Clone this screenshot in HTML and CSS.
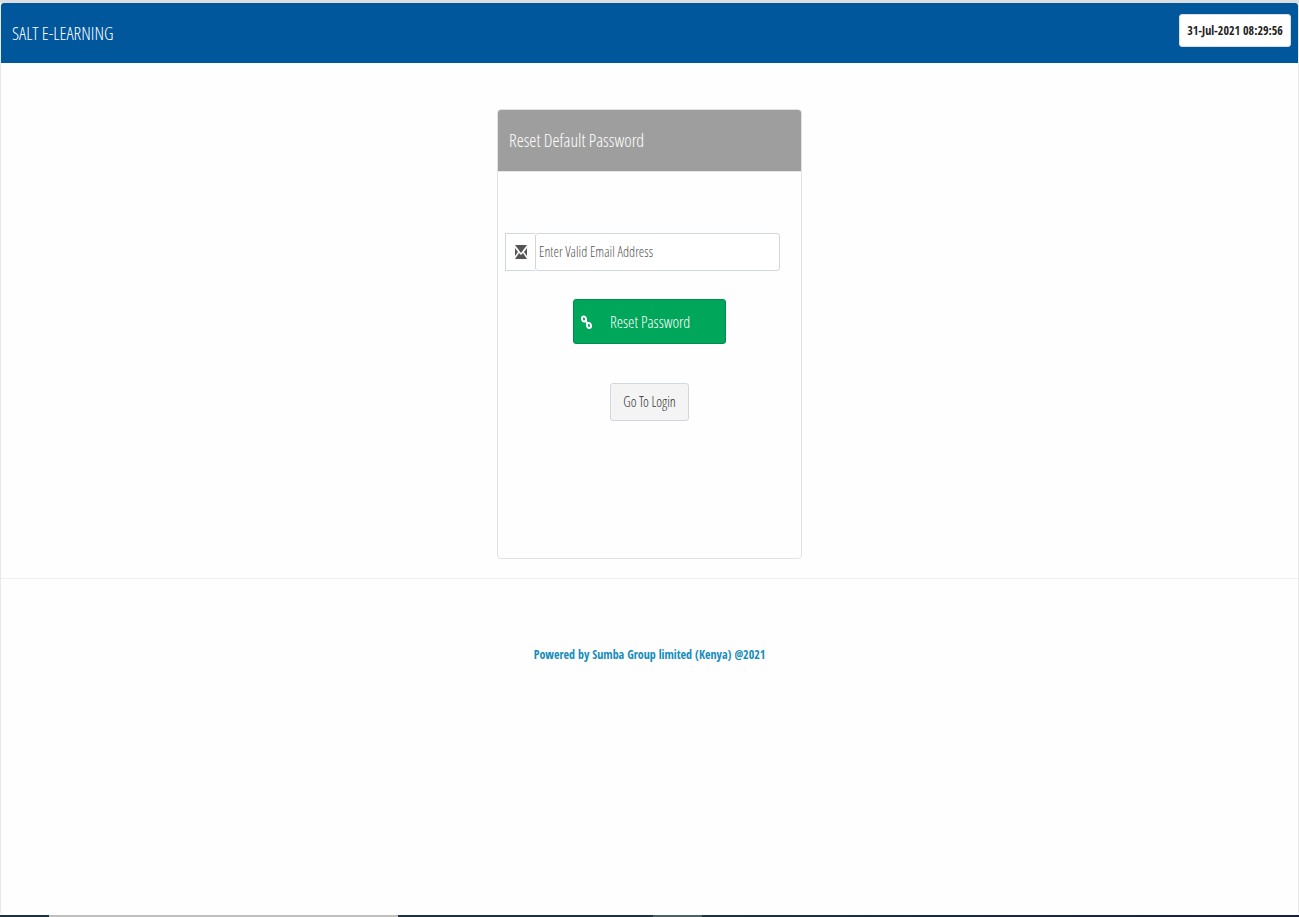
FILE: index.html
```
<!DOCTYPE html>
<html lang="en">
<head>
    <meta charset="UTF-8">
    <meta name="viewport" content="width=device-width, initial-scale=1.0">
    <title>SALT E-LEARNING</title>
    <link rel="stylesheet" href="styles.css">
</head>
<body>
    <div class="page">
        <header class="navbar">
            <h1 class="brand">SALT E-LEARNING</h1>
            <button type="button" class="clock">31-Jul-2021 08:29:56</button>
        </header>

        <main class="content">
            <section class="panel">
                <h2 class="panel-heading">Reset Default Password</h2>
                <form class="panel-body">
                    <div class="input-group">
                        <label class="addon" for="email" aria-label="Email">
                            <svg width="12" height="14" viewBox="0 0 12 14" fill="#555">
                                <path d="M0 0h12L6 8z"/>
                                <path d="M0 3l3 4-3 4z"/>
                                <path d="M12 3L9 7l3 4z"/>
                                <path d="M0 14l4-6 2 2 2-2 4 6z"/>
                            </svg>
                        </label>
                        <input type="email" id="email" class="form-control" placeholder="Enter Valid Email Address">
                    </div>
                    <button type="button" class="btn btn-success">
                        <svg width="11" height="14" viewBox="0 0 11 14" fill="none" stroke="#fff" stroke-width="2">
                            <ellipse cx="3" cy="4" rx="2" ry="2.500" transform="rotate(-15 3 4)"/>
                            <ellipse cx="8" cy="10.500" rx="2" ry="2.500" transform="rotate(-15 8 10.500)"/>
                            <path d="M4 5l3 4"/>
                        </svg>
                        <span>Reset Password</span>
                    </button>
                    <button type="button" class="btn btn-default">Go To Login</button>
                </form>
            </section>
        </main>

        <footer class="footer">
            <a href="#">Powered by Sumba Group limited (Kenya) @2021</a>
        </footer>
    </div>

    <div class="taskbar">
        <span class="task-start"></span>
        <span class="task-search"></span>
        <span class="task-apps"></span>
        <span class="task-active"></span>
        <span class="task-tray"></span>
    </div>
</body>
</html>
```
FILE: styles.css
```
* {
    box-sizing: border-box;
}

body {
    display: flex;
    flex-direction: column;
    min-height: 100vh;
    margin: 0;
    border-top: 3px solid #dcdfe2;
    background-color: #fefefe;
    font-family: "Open Sans Condensed Light", "Open Sans Condensed", "Noto Sans CJK SC", sans-serif;
    font-size: 14px;
    line-height: 20px;
    color: #333;
}

button,
input {
    font: inherit;
}

.page {
    flex: 1;
    border: 1px solid #e7e7e7;
    border-width: 0 1px;
    border-radius: 4px;
}

.navbar {
    display: flex;
    justify-content: space-between;
    align-items: flex-start;
    height: 60px;
    padding: 11px 7px 0 11px;
    border-radius: 3px 3px 0 0;
    background-color: #00579c;
}

.brand {
    margin: 0;
    font-size: 18px;
    font-weight: normal;
    line-height: 38px;
    color: #fff;
}

.clock,
.footer a {
    font-family: "Open Sans Condensed", "Noto Sans CJK SC", sans-serif;
    font-size: 12px;
    font-weight: bold;
}

.clock {
    min-width: 112px;
    height: 33px;
    padding: 0 4px;
    border: 1px solid #ddd;
    border-radius: 3px;
    background-color: #fff;
    color: #222;
}

.content {
    padding: 46px 0 19px;
    border-bottom: 1px solid #eee;
}

.panel {
    width: 305px;
    min-height: 450px;
    margin: 0 auto;
    border: 1px solid #e2e2e2;
    border-radius: 4px;
}

.panel-heading {
    margin: 0;
    padding: 0 11px;
    border-bottom: 1px solid #e7e7e7;
    border-radius: 3px 3px 0 0;
    background-color: #9e9e9e;
    font-size: 18px;
    font-weight: normal;
    line-height: 61px;
    color: #fff;
}

.panel-body {
    display: flex;
    flex-direction: column;
    align-items: center;
    padding: 61px 7px 0;
}

.input-group {
    display: flex;
    align-self: flex-start;
    width: 275px;
    height: 38px;
    margin-bottom: 28px;
}

.addon {
    display: flex;
    align-items: center;
    justify-content: center;
    width: 30px;
    border: 1px solid #d2d6de;
    border-right: 0;
    background-color: #fff;
}

.form-control {
    flex: 1;
    min-width: 0;
    padding: 0 3px;
    border: 1px solid #d2d6de;
    border-radius: 3px;
    background-color: #fff;
}

.form-control::placeholder {
    color: #555;
    opacity: 1;
}

.btn {
    border: 1px solid;
    border-radius: 3px;
    cursor: pointer;
}

.btn-success {
    display: flex;
    align-items: center;
    gap: 18px;
    width: 153px;
    height: 45px;
    margin-bottom: 39px;
    padding: 0 7px;
    border-color: #008d4c;
    background-color: #00a65a;
    font-size: 16px;
    color: #fff;
}

.btn-default {
    width: 79px;
    height: 38px;
    padding: 0;
    border-color: #d2d6de;
    background-color: #f4f4f4;
    color: #333;
}

.footer {
    padding: 65px 0;
    text-align: center;
}

.footer a {
    color: #158cba;
    text-decoration: none;
}

.taskbar {
    display: flex;
    height: 2px;
    background-color: #1c3440;
}

.task-start {
    width: 49px;
}

.task-search {
    width: 349px;
    background-color: #c0c0c0;
}

.task-apps {
    width: 255px;
}

.task-active {
    width: 49px;
    background-color: #4c6068;
}

.task-tray {
    flex: 1;
    background: linear-gradient(to right, #1c3440, #16203f);
}
```
